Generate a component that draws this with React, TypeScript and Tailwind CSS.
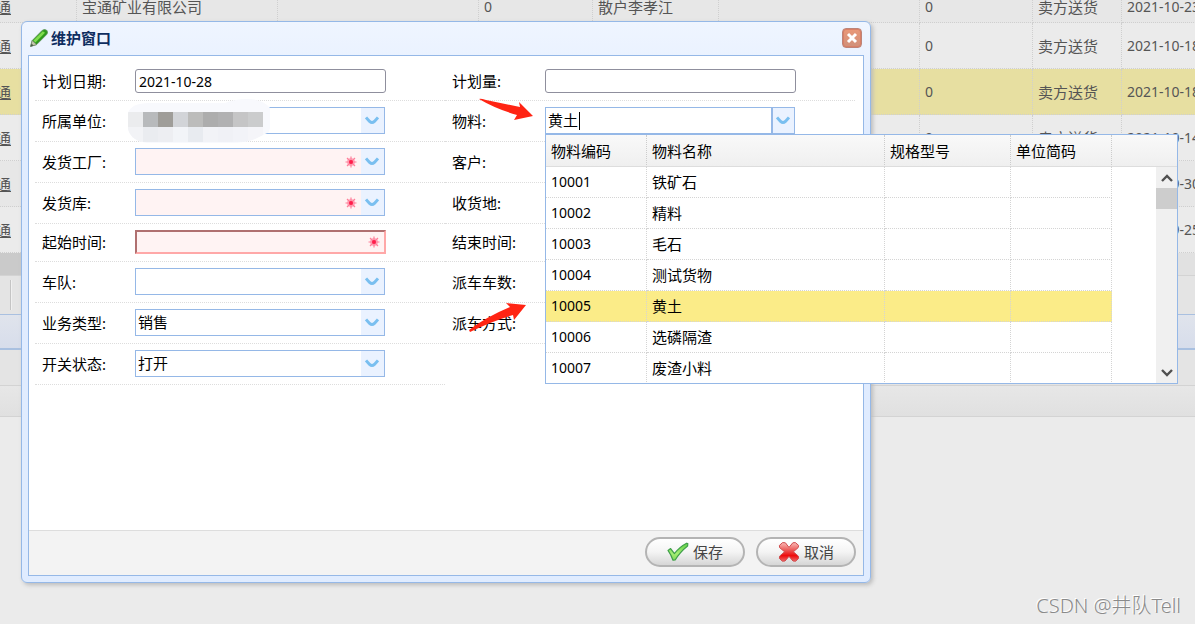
import React from "react";

type Kind = "text" | "combo";

interface FieldDef {
  id: string;
  label: string;
  kind: Kind;
  value?: string;
  required?: boolean;
  masked?: boolean;
  active?: boolean;
}

const fieldRows: FieldDef[][] = [
  [
    { id: "planDate", label: "计划日期", kind: "text", value: "2021-10-28" },
    { id: "planQty", label: "计划量", kind: "text" },
  ],
  [
    { id: "company", label: "所属单位", kind: "combo", masked: true },
    { id: "material", label: "物料", kind: "combo", value: "黄土", active: true },
  ],
  [
    { id: "factory", label: "发货工厂", kind: "combo", required: true },
    { id: "customer", label: "客户", kind: "combo" },
  ],
  [
    { id: "warehouse", label: "发货库", kind: "combo", required: true },
    { id: "destination", label: "收货地", kind: "combo" },
  ],
  [
    { id: "startTime", label: "起始时间", kind: "text", required: true },
    { id: "endTime", label: "结束时间", kind: "text" },
  ],
  [
    { id: "fleet", label: "车队", kind: "combo" },
    { id: "truckCount", label: "派车车数", kind: "combo" },
  ],
  [
    { id: "bizType", label: "业务类型", kind: "combo", value: "销售" },
    { id: "dispatchMode", label: "派车方式", kind: "combo" },
  ],
  [{ id: "switchState", label: "开关状态", kind: "combo", value: "打开" }],
];

const materials = [
  ["10001", "铁矿石"],
  ["10002", "精料"],
  ["10003", "毛石"],
  ["10004", "测试货物"],
  ["10005", "黄土"],
  ["10006", "选磷隔渣"],
  ["10007", "废渣小料"],
];

const plans = [
  { company: "宝通矿业有限公司", customer: "散户李孝江", date: "2021-10-23", row: "h-[31px] bg-[#e7e7e7]" },
  { company: "", customer: "", date: "2021-10-18", row: "h-[46px] bg-[#ebebeb]" },
  { company: "", customer: "", date: "2021-10-18", row: "h-[46px] bg-[#e7dfa1]" },
  { company: "", customer: "", date: "2021-10-14", row: "h-[46px] bg-[#ebebeb]" },
  { company: "", customer: "", date: "2021-09-30", row: "h-[46px] bg-[#e7e7e7]" },
  { company: "", customer: "", date: "2021-09-25", row: "h-[46px] bg-[#ebebeb]" },
];

const mosaic = [
  ["#ebecee", "#b8babc", "#9f9d99", "#d2d4d8", "#bcbcbb", "#adadad", "#b1b1b2", "#c5c5c6", "#cbcccd"],
  ["#f2f3f6", "#eaecf0", "#edeef2", "#f2f4f8", "#e8ebf0", "#f2f3f7", "#f0f1f6", "#f2f3f8", "#f5f5f9"],
];

function Chevron() {
  return (
    <svg viewBox="0 0 14 9" className="mr-[2px] h-[9px] w-[14px]" fill="none" aria-hidden="true">
      <path d="M1 1.4 L4.6 5.4 Q7 7.6 9.4 5.4 L13 1.4" stroke="#79bff0" strokeWidth="3" />
    </svg>
  );
}

function RequiredMark() {
  return (
    <svg viewBox="0 0 12 12" className="h-3 w-3" aria-hidden="true">
      <circle cx="6" cy="6" r="4" fill="#ffb3c2" />
      <path
        d="M6 0.5V11.5M0.5 6H11.5M2 2L10 10M10 2L2 10"
        stroke="#ff7f99"
        strokeWidth="1.2"
      />
      <circle cx="6" cy="6" r="2" fill="#ff1f4b" />
    </svg>
  );
}

function PencilIcon() {
  return (
    <svg viewBox="0 0 18 18" className="h-[18px] w-[18px]" aria-hidden="true">
      <path d="M0.6 17.4 L2.2 11.6 L12.2 1.4 Q14.6 -0.4 16.8 1.4 Q18.4 3.6 16.6 5.6 L6.6 15.6 Z" fill="#2f9a1c" stroke="#5b8f57" strokeWidth="0.8" />
      <path d="M3.4 11.6 L12.8 2.2 L15 3.8 L5.4 13.6 Z" fill="#7fdc4e" />
      <path d="M0.6 17.4 L2.2 11.6 L6.6 15.6 Z" fill="#c4c9ae" stroke="#6f7d68" strokeWidth="0.6" />
      <path d="M0.6 17.4 L1.5 14.5 L3.6 16.5 Z" fill="#4a5a4a" />
    </svg>
  );
}

function CheckIcon() {
  return (
    <svg viewBox="0 0 22 20" className="h-5 w-[22px]" aria-hidden="true">
      <defs>
        <linearGradient id="checkFill" x1="0" y1="0" x2="0" y2="1">
          <stop offset="0" stopColor="#5fcf45" />
          <stop offset="0.6" stopColor="#a6ee74" />
          <stop offset="1" stopColor="#7fd957" />
        </linearGradient>
      </defs>
      <path
        d="M1 8.4 L3.6 6.6 L7.4 11.6 Q12.4 5 19.6 1.2 L20.8 1.6 L20.6 4 Q13 10 8.2 18 L6 18.2 Q4 12.6 1 8.4 Z"
        fill="url(#checkFill)"
        stroke="#3f9f4a"
        strokeWidth="1.2"
        strokeLinejoin="round"
      />
    </svg>
  );
}

function CrossIcon() {
  return (
    <svg viewBox="0 0 22 20" className="h-5 w-[22px]" aria-hidden="true">
      <defs>
        <linearGradient id="crossFill" x1="0" y1="0" x2="0" y2="1">
          <stop offset="0" stopColor="#f9bcb8" />
          <stop offset="0.4" stopColor="#ec5a58" />
          <stop offset="0.7" stopColor="#ee0c0c" />
          <stop offset="1" stopColor="#ee6a6a" />
        </linearGradient>
      </defs>
      <path
        d="M1.4 3.4 L4.6 0.6 L7.4 0.8 L11 5.4 L14.8 0.8 L17.4 0.6 L20.6 3.4 L20.2 5.6 L15.4 9.8 L20.4 14.2 L20.6 16.4 L17.6 19.2 L15 19 L11 14.4 L7 19 L4.4 19.2 L1.4 16.4 L1.6 14.2 L6.6 9.8 L1.6 5.6 Z"
        fill="url(#crossFill)"
        stroke="#cf4a4c"
        strokeWidth="1"
        strokeLinejoin="round"
      />
    </svg>
  );
}

function Field({ field }: { field: FieldDef }) {
  return (
    <div className="flex items-center border-b border-dotted border-[#dddddd] pt-[6px] pb-[7px] pl-[7px]">
      <label htmlFor={field.id} className="w-[93px] shrink-0 text-[15px] leading-[20px] text-black">
        {field.label}:
      </label>
      {field.kind === "text" ? (
        <div className="relative w-[251px]">
          <input
            id={field.id}
            type="text"
            defaultValue={field.value}
            className={
              field.required
                ? "block h-[24px] w-full border-2 border-t-[#b07070] border-r-[#ffa8a8] border-b-[#ffa8a8] border-l-[#b07070] bg-[#fff3f3] px-[2px] text-[14px] outline-none"
                : "block h-[24px] w-full rounded-[3px] border border-[#8f8f9d] bg-white px-[3px] text-[14px] outline-none"
            }
          />
          {field.required && (
            <span className="absolute top-[6px] right-[6px]">
              <RequiredMark />
            </span>
          )}
        </div>
      ) : (
        <div
          className={
            field.required
              ? "relative flex h-[27px] w-[250px] border border-[#95b8e7] bg-[#fff3f3]"
              : "relative flex h-[27px] w-[250px] border border-[#95b8e7] bg-white"
          }
        >
          <input
            id={field.id}
            type="text"
            defaultValue={field.value}
            className="min-w-0 flex-1 bg-transparent px-[2px] text-[15px] text-black outline-none"
          />
          {field.required && (
            <span className="flex w-[16px] items-center">
              <RequiredMark />
            </span>
          )}
          <button
            type="button"
            aria-label={`展开${field.label}`}
            className={
              field.active
                ? "flex w-[23px] items-center justify-center border-l-2 border-[#95b8e7] bg-[#eaf2ff]"
                : "flex w-[23px] items-center justify-center bg-[#eaf2ff]"
            }
          >
            <Chevron />
          </button>
          {field.active && <span className="absolute top-[4px] left-[33px] h-[18px] w-px bg-black" />}
          {field.masked && <MaskedValue />}
        </div>
      )}
    </div>
  );
}

function MaskedValue() {
  return (
    <svg viewBox="0 0 146 46" className="absolute -top-[9px] -left-[9px] h-[46px] w-[146px]" aria-hidden="true">
      <defs>
        <clipPath id="brush">
          <path d="M1 14 Q4 4 22 4 H98 Q108 0 120 0 Q136 0 143 9 V29 L142 33 Q134 37 128 40 Q118 44 104 44 H20 Q4 42 1 30 Z" />
        </clipPath>
      </defs>
      <g clipPath="url(#brush)">
        <rect width="146" height="46" fill="#f8f9fd" />
        {mosaic.map((row, y) =>
          row.map((color, x) => (
            <rect key={`${x}-${y}`} x={1 + x * 15} y={13 + y * 15} width="15" height="15" fill={color} />
          )),
        )}
      </g>
    </svg>
  );
}

function MaterialPopup() {
  return (
    <div className="absolute top-[112px] left-[523px] z-20 w-[633px] border border-[#95b8e7] bg-white text-[15px] text-black">
      <div className="flex h-[248px] overflow-hidden bg-white">
        <table className="w-full table-fixed border-separate border-spacing-0 self-start text-left">
          <colgroup>
            <col className="w-[101px]" />
            <col className="w-[238px]" />
            <col className="w-[126px]" />
            <col className="w-[101px]" />
            <col />
          </colgroup>
          <thead>
            <tr className="h-[32px] bg-linear-to-b from-[#f9f9f9] to-[#efefef]">
              {["物料编码", "物料名称", "规格型号", "单位简码"].map((name) => (
                <th
                  key={name}
                  className="border-r border-b border-r-[#cccccc] border-b-[#dddddd] p-0 pl-[5px] leading-[20px] font-normal [border-right-style:dotted]"
                >
                  {name}
                </th>
              ))}
              <td className="border-b border-[#dddddd]" />
            </tr>
          </thead>
          <tbody>
            {materials.map(([code, name]) => (
              <tr key={code} className="h-[31px]">
                {[code, name, "", ""].map((text, i) => (
                  <td
                    key={i}
                    className={`border-r border-b border-dotted border-[#d4d4d4] p-0 pl-[5px] leading-[20px] ${
                      code === "10005" ? "bg-[#fbec88]" : ""
                    } ${i === 0 ? "text-[14px]" : ""}`}
                  >
                    {text}
                  </td>
                ))}
                <td />
              </tr>
            ))}
          </tbody>
        </table>
      </div>
      <div className="absolute top-[32px] right-0 bottom-0 flex w-[21px] flex-col bg-[#f0f0f0]">
        <button type="button" aria-label="向上滚动" className="flex h-[21px] items-center justify-center">
          <svg viewBox="0 0 12 8" className="h-2 w-3" fill="none">
            <path d="M1 7 L6 2 L11 7" stroke="#505050" strokeWidth="2.4" />
          </svg>
        </button>
        <div className="h-[21px] bg-[#cdcdcd]" />
        <div className="flex-1" />
        <button type="button" aria-label="向下滚动" className="flex h-[21px] items-center justify-center">
          <svg viewBox="0 0 12 8" className="h-2 w-3" fill="none">
            <path d="M1 1 L6 6 L11 1" stroke="#505050" strokeWidth="2.4" />
          </svg>
        </button>
      </div>
    </div>
  );
}

function PlanGrid() {
  const cell = "border-r border-b border-dotted border-[#cfcfcf] p-0 pl-[5px] whitespace-nowrap";
  return (
    <div>
      <div className="overflow-hidden">
        <table className="-mt-[8px] w-[1240px] table-fixed border-separate border-spacing-0 text-[15px] leading-[20px] text-[#555555]">
          <colgroup>
            <col className="w-[77px]" />
            <col className="w-[201px]" />
            <col className="w-[201px]" />
            <col className="w-[114px]" />
            <col className="w-[126px]" />
            <col className="w-[201px]" />
            <col className="w-[113px]" />
            <col className="w-[89px]" />
            <col />
          </colgroup>
          <tbody>
            {plans.map((plan, i) => (
              <tr key={i} className={plan.row}>
                <td className="border-r border-b border-dotted border-[#cfcfcf] p-0">
                  <a href="#plan" className="flex w-[11px] justify-end overflow-hidden underline">
                    通
                  </a>
                </td>
                <td className={cell}>{plan.company}</td>
                <td className={cell} />
                <td className={`${cell} text-[14px]`}>{plan.company ? "0" : ""}</td>
                <td className={cell}>{plan.customer}</td>
                <td className={cell} />
                <td className={`${cell} text-[14px]`}>0</td>
                <td className={cell}>卖方送货</td>
                <td className={`${cell} text-[14px]`}>{plan.date}</td>
              </tr>
            ))}
          </tbody>
        </table>
      </div>
      <div className="flex h-[22px] bg-[#e1e1e1]">
        <div className="w-1/2 bg-[#cacaca]" />
      </div>
      <div className="flex h-[39px] border-t border-[#d3d3d3] bg-[#e4e4e4] py-[4px] pl-[10px]">
        <div className="w-[2px] border-l border-[#c4c4c4] bg-[#f0f0f0]" />
      </div>
      <div className="h-[36px] border-t border-b-2 border-[#a9c0e0] bg-linear-to-b from-[#e0e4ec] to-[#d7ddeb]" />
      <div className="h-[35px] bg-[#e4e4e4]" />
      <div className="h-[32px] border-y border-[#d3d3d3] bg-linear-to-b from-[#e7e7e7] to-[#e0e0e0]" />
    </div>
  );
}

function EditDialog() {
  const action =
    "flex h-[30px] w-[100px] items-center justify-center gap-1 rounded-full border-2 border-[#b4b4b4] bg-linear-to-b from-white via-[#f4f4f4] to-[#d6d6d6] text-[15px] text-[#444444]";
  return (
    <section
      role="dialog"
      aria-label="维护窗口"
      className="absolute top-[21px] left-[21px] z-10 w-[850px] rounded-[6px] border border-[#95b8e7] bg-linear-to-b from-[#eff5ff] to-[#e0ecff] to-20% px-[6px] pb-[6px] shadow-[2px_2px_4px_#bbbbbb]"
    >
      <header className="flex h-[33px] items-center gap-[3px] pr-[2px] pb-[2px] pl-[2px]">
        <PencilIcon />
        <h1 className="flex-1 text-[15px] leading-[20px] font-bold text-[#0e2d5f]">维护窗口</h1>
        <button
          type="button"
          aria-label="关闭"
          className="flex h-[20px] w-[20px] items-center justify-center rounded-[4px] border border-[#bd8478] bg-linear-to-b from-[#ea9878] to-[#d0907a] shadow-[inset_0_0_0_1px_#d97f66]"
        >
          <svg viewBox="0 0 12 12" className="h-3 w-3" aria-hidden="true">
            <path d="M2 2 L10 10 M10 2 L2 10" stroke="#ffffff" strokeWidth="3" />
          </svg>
        </button>
      </header>
      <div className="border border-[#95b8e7] bg-white">
        <form className="min-h-[474px] pt-[7px] pl-[6px]">
          {fieldRows.map((row) => (
            <div key={row[0].id} className="grid w-[820px] grid-cols-2">
              {row.map((field) => (
                <Field key={field.id} field={field} />
              ))}
            </div>
          ))}
        </form>
        <footer className="flex h-[45px] justify-end gap-[11px] border-t border-[#dddddd] bg-[#f3f3f3] pt-[6px] pr-[7px]">
          <button type="button" className={action}>
            <CheckIcon />
            保存
          </button>
          <button type="button" className={action}>
            <CrossIcon />
            取消
          </button>
        </footer>
      </div>
      <MaterialPopup />
      <svg viewBox="0 0 56 24" className="absolute top-[76px] left-[456px] z-30 h-[24px] w-[56px]" aria-hidden="true">
        <path d="M1 1 Q2 0 8 2 L42 9 L41 4 L55 18 L36 22 L39 17 Q18 11 1 1 Z" fill="#ff2413" />
      </svg>
      <svg viewBox="0 0 60 32" className="absolute top-[280px] left-[446px] z-30 h-[32px] w-[60px]" aria-hidden="true">
        <path d="M1 28 Q18 15 42 5 L38 1 L58 3 L46 18 L45 13 Q24 19 2 30 Z" fill="#ff2413" />
      </svg>
    </section>
  );
}

export default function App() {
  return (
    <main className="relative min-h-screen overflow-hidden bg-[#ebebeb] font-['Noto_Sans','Noto_Sans_CJK_SC',sans-serif]">
      <PlanGrid />
      <EditDialog />
      <p className="absolute right-[14px] bottom-[5px] text-[20px] leading-[26px] font-light text-[#8a8a8a] [text-shadow:-1px_-1px_0_#ffffff]">
        CSDN @井队Tell
      </p>
    </main>
  );
}
